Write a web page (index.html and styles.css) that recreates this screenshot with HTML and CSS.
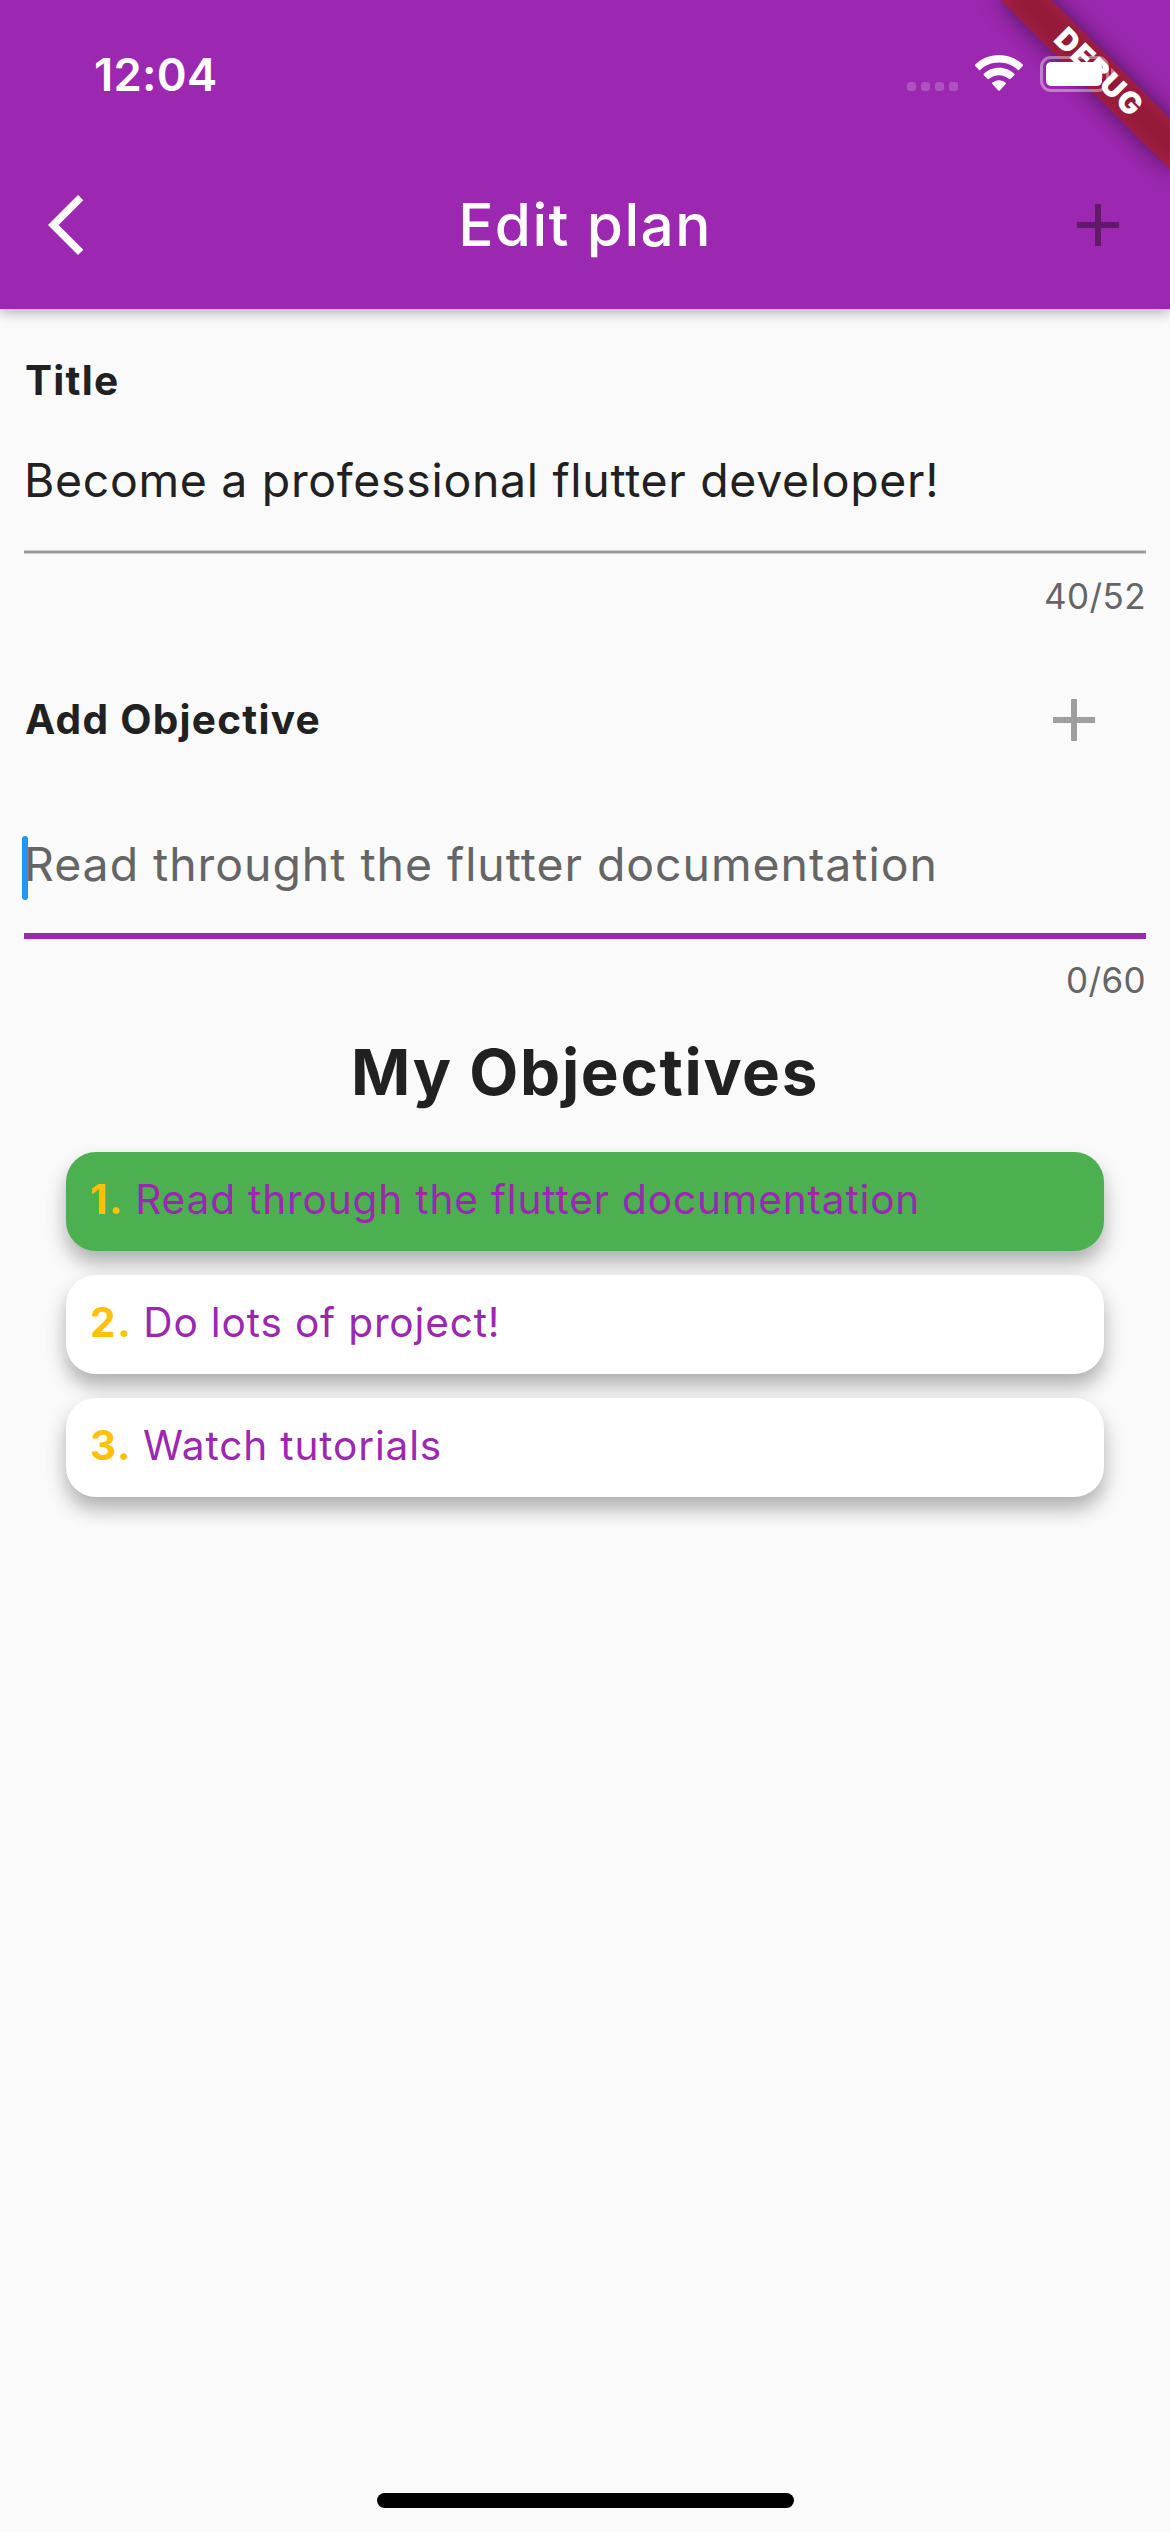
FILE: index.html
```html
<!DOCTYPE html>
<html lang="en">
<head>
<meta charset="utf-8">
<title>Edit plan</title>
<link rel="stylesheet" href="styles.css">
</head>
<body>
<div class="screen">
  <header class="header">
    <div class="status">
      <span class="time">12:04</span>
      <div class="indicators">
        <div class="dots"><i></i><i></i><i></i><i></i></div>
        <svg class="wifi" width="48" height="36" viewBox="0 0 48 36" fill="#fff">
          <path d="M24 0C14.700 0 6.200 3.700 0.300 9.600Q-0.400 10.300 0.300 11L4 15Q4.600 15.500 5.200 14.900C10 10.100 16.600 7.400 24 7.400S38 10.100 42.800 14.900Q43.400 15.500 44 15L47.700 11Q48.400 10.300 47.700 9.600C41.800 3.700 33.300 0 24 0Z"/>
          <path d="M24 12.800C18 12.800 12.600 15.100 8.800 18.800Q8.100 19.500 8.800 20.200L12.700 24.100Q13.300 24.600 13.900 24.100C16.600 21.600 20.100 20.200 24 20.200S31.400 21.600 34.100 24.100Q34.700 24.600 35.300 24.100L39.200 20.200Q39.900 19.500 39.200 18.800C35.400 15.100 30 12.800 24 12.800Z"/>
          <path d="M24 25.200C21.400 25.200 19.100 26.100 17.300 27.700Q16.700 28.400 17.300 29.100L23.300 35.400Q24 36.100 24.700 35.400L30.700 29.100Q31.300 28.400 30.700 27.700C28.900 26.100 26.600 25.200 24 25.200Z"/>
        </svg>
        <svg class="battery" width="76" height="36" viewBox="0 0 76 36">
          <rect x="1.500" y="1.500" width="66" height="33" rx="9.500" fill="none" stroke="#fff" stroke-opacity=".4" stroke-width="3"/>
          <rect x="6" y="6" width="56" height="24" rx="5" fill="#fff"/>
          <path d="M71 12C73.500 13 75 15.300 75 18S73.500 23 71 24Z" fill="#fff" fill-opacity=".4"/>
        </svg>
      </div>
    </div>
    <div class="appbar">
      <svg class="back" width="36" height="60" viewBox="0 0 36 60" fill="#fff"><path d="M30 0L0 30L30 60L35.300 54.700L10.600 30L35.300 5.300Z"/></svg>
      <h1 class="bar-title">Edit plan</h1>
      <svg class="plus plus-dark" width="42" height="42" viewBox="0 0 42 42"><path d="M18 0h6v18h18v6H24v18h-6V24H0v-6h18Z"/></svg>
    </div>
    <div class="debug">
      <div class="debug-shadow"></div>
      <div class="debug-band">DEBUG</div>
    </div>
  </header>
  <main class="content">
    <div class="label">Title</div>
    <div class="field field-title">Become a professional flutter developer!</div>
    <div class="rule"></div>
    <div class="counter">40/52</div>
    <div class="add-row">
      <div class="label-text">Add Objective</div>
      <svg class="plus plus-grey" width="42" height="42" viewBox="0 0 42 42"><path d="M18 0h6v18h18v6H24v18h-6V24H0v-6h18Z"/></svg>
    </div>
    <div class="field field-hint">Read throught the flutter documentation<span class="caret"></span></div>
    <div class="rule rule-active"></div>
    <div class="counter counter-two">0/60</div>
    <h2 class="heading">My Objectives</h2>
    <ol class="list">
      <li class="card card-done"><b>1.</b><span>Read through the flutter documentation</span></li>
      <li class="card"><b>2.</b><span>Do lots of project!</span></li>
      <li class="card"><b>3.</b><span>Watch tutorials</span></li>
    </ol>
  </main>
  <div class="home"></div>
</div>
</body>
</html>
```
FILE: styles.css
```css
* { box-sizing: border-box; margin: 0; padding: 0; }

body {
  background: #fafafa;
  font-family: Inter, "Liberation Sans", sans-serif;
  font-size: 40.600px;
  font-weight: 400;
  color: #212121;
  white-space: nowrap;
}

.screen {
  width: 1170px;
  height: 2532px;
  display: flex;
  flex-direction: column;
  overflow: hidden;
}

.header {
  position: relative;
  height: 309px;
  background: #9c27b0;
  color: #fff;
  box-shadow: 0 4px 12px rgba(0, 0, 0, .28);
}

.status {
  display: flex;
  justify-content: space-between;
  align-items: flex-start;
  height: 141px;
  padding: 55px 54px 0 94px;
}

.time { font-size: 45.400px; font-weight: 600; line-height: 40px; letter-spacing: .3px; }

/* Status icons sit above the debug ribbon */
.indicators { position: relative; z-index: 2; display: flex; align-items: flex-start; }

.dots { display: flex; gap: 5px; margin: 27px 17px 0 0; }
.dots i { width: 9px; height: 9px; border-radius: 3px; background: rgba(255, 255, 255, .2); }

.battery { margin: 1px 0 0 17px; }

.appbar {
  display: flex;
  align-items: center;
  justify-content: space-between;
  height: 168px;
  padding: 0 51px 0 48px;
}

.bar-title { margin-left: 9px; font-size: 58.500px; font-weight: 500; line-height: 70px; letter-spacing: 1.400px; }

.plus { display: block; }
.plus-dark { fill: #611969; }
.plus-grey { fill: #9e9e9e; }

.debug {
  position: absolute;
  top: 0;
  right: 0;
  width: 240px;
  height: 240px;
  overflow: hidden;
}

.debug-shadow,
.debug-band {
  position: absolute;
  left: 48px;
  top: 54px;
  width: 240px;
  height: 36px;
  transform: rotate(45deg);
}

.debug-shadow { background: rgba(0, 0, 0, .5); filter: blur(12px); }

.debug-band {
  padding-left: 2px;
  background: rgba(183, 28, 28, .627);
  font-size: 30.200px;
  font-weight: 900;
  line-height: 34px;
  letter-spacing: 1.200px;
  text-align: center;
}

.content { padding: 0 24px; }

.label,
.label-text { padding-left: 1px; font-weight: 700; letter-spacing: 1.250px; }
.label { height: 60px; margin-top: 42px; line-height: 60px; }
.label-text { line-height: 58px; }

.field { position: relative; height: 60px; font-size: 46.400px; line-height: 60px; letter-spacing: .7px; }
.field-title { margin-top: 39px; }
.field-hint { margin-top: 84px; color: #656565; letter-spacing: .970px; }

.caret {
  position: absolute;
  left: -2px;
  top: 2px;
  width: 6px;
  height: 64px;
  border-radius: 3px;
  background: #2196f3;
}

.rule { height: 4px; margin-top: 40px; background: #999; border: solid #cbcbcb; border-width: 1px 0; }
.rule-active { height: 6px; margin-top: 39px; background: #9c27b0; border: 0; }

.counter { height: 40px; margin-top: 22px; font-size: 35px; line-height: 40px; letter-spacing: .4px; text-align: right; color: #656565; }
.counter-two { margin-top: 21px; }

.add-row { display: flex; align-items: center; justify-content: space-between; height: 60px; margin-top: 74px; padding-right: 51px; }

.heading { height: 80px; margin-top: 32px; font-size: 63.700px; font-weight: 700; line-height: 80px; letter-spacing: 1.650px; text-align: center; }

.list { display: flex; flex-direction: column; gap: 24px; margin: 40px 42px 0; list-style: none; }

.card {
  display: flex;
  gap: 11px;
  height: 99px;
  padding-left: 24px;
  border-radius: 30px;
  background: #fff;
  box-shadow: 0 12px 20px rgba(0, 0, 0, .3);
  line-height: 96px;
  letter-spacing: .840px;
  color: #9c27b0;
}
.card b { font-weight: 700; letter-spacing: 1.600px; color: #ffc107; }
.card-done { background: #4caf50; }

.home { width: 417px; height: 15px; margin: auto auto 24px; border-radius: 8px; background: #000; }
```
